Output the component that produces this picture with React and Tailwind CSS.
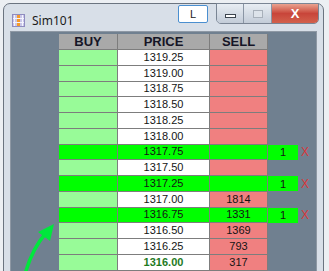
import React from 'react';

const rows = [
  { price: '1319.25' },
  { price: '1319.00' },
  { price: '1318.75' },
  { price: '1318.50' },
  { price: '1318.25' },
  { price: '1318.00' },
  { price: '1317.75', hit: true, order: 1 },
  { price: '1317.50' },
  { price: '1317.25', hit: true, order: 1 },
  { price: '1317.00', sell: '1814' },
  { price: '1316.75', hit: true, sell: '1331', order: 1 },
  { price: '1316.50', sell: '1369' },
  { price: '1316.25', sell: '793' },
  { price: '1316.00', sell: '317', last: true },
];

const font = { fontFamily: '"Liberation Sans", Arial, sans-serif' };

function TitleIcon() {
  return (
    <svg width="13" height="13" viewBox="0 0 13 13">
      <rect x="0" y="0" width="13" height="13" fill="#c9c6e8" />
      <rect x="5" y="0" width="3" height="13" fill="#f59a2a" />
      <path d="M0 4.5H13M0 8.5H13M2.5 0V13M10.5 0V13" stroke="#f4f4ff" strokeWidth="1" />
      <rect x="0.5" y="0.5" width="12" height="12" fill="none" stroke="#8f8cc0" />
    </svg>
  );
}

function Row({ r }) {
  const buyBg = r.hit ? 'bg-[#00ff00]' : 'bg-[#98fb98]';
  const priceBg = r.hit ? 'bg-[#00ff00]' : 'bg-white';
  const sellBg = r.hit ? 'bg-[#00ff00]' : 'bg-[#f08080]';
  return (
    <div className="flex h-[15.75px]">
      <div className="w-[48px]" />
      <div className={`w-[59px] border-r border-b border-[#7d7d7d] ${buyBg}`} />
      <div className={`w-[92px] border-r border-b border-[#7d7d7d] ${priceBg} flex items-center justify-center text-[11px] leading-none ${r.last ? 'font-bold text-[#1e7a1e]' : 'text-[#141414]'}`}>
        {r.price}
      </div>
      <div className={`w-[58px] border-r border-b border-[#7d7d7d] ${sellBg} flex items-center justify-center text-[11px] leading-none text-[#141414]`}>
        {r.sell}
      </div>
      {r.order && (
        <div className="flex items-center">
          <div className="w-[30px] h-[15px] bg-[#00ff00] flex items-center justify-center text-[11px] text-[#141414]">{r.order}</div>
          <span className="ml-[3px] text-[12px] leading-none text-[#d8383c]">X</span>
        </div>
      )}
    </div>
  );
}

export default function App() {
  return (
    <div className="relative w-[329px] h-[271px] overflow-hidden bg-[#eceff3] pt-[3px] pl-[3px]" style={font}>
      <div className="w-[321px] h-[300px] rounded-t-[7px] border border-[#6b7480] bg-[#d8dfe8]">
        <div className="relative h-[27px] flex items-center pl-[8px] pt-[6px]">
          <TitleIcon />
          <span className="ml-[7px] text-[12px] text-[#1b1b1b]" style={{ fontFamily: '"Noto Sans", "Liberation Sans", sans-serif' }}>Sim101</span>
          <div className="absolute left-[174px] top-[1px] w-[30px] h-[18px] bg-white border border-[#4a8fd0] rounded-[2px] flex items-center justify-center text-[11px] text-[#222]">L</div>
          <div className="absolute left-[212px] top-[-1px] flex h-[21px] rounded-b-[5px] border border-[#7a8594] overflow-hidden">
            <div className="w-[27px] bg-gradient-to-b from-[#e8edf3] to-[#c3ccd8] border-r border-[#8a95a4] flex items-end justify-center pb-[5px]">
              <div className="w-[11px] h-[4px] bg-white border border-[#3c444e]" />
            </div>
            <div className="w-[28px] bg-gradient-to-b from-[#e8edf3] to-[#c3ccd8] border-r border-[#8a95a4] flex items-center justify-center">
              <div className="w-[10px] h-[8px] border border-[#a8b0ba] bg-[#dde3ea]" />
            </div>
            <div className="w-[46px] bg-gradient-to-b from-[#e9a18f] via-[#c8453a] to-[#d2604c] flex items-center justify-center text-white font-bold text-[13px]">
              X
            </div>
          </div>
        </div>
        <div className="mx-[6px] h-[270px] border border-[#8e98a4] bg-[#708090] pt-[2px]">
          <div className="flex h-[16px]">
            <div className="w-[48px]" />
            <div className="w-[59px] border-r border-b border-[#7d7d7d] bg-[#a9a9a9] flex items-center justify-center text-[13px] font-bold text-[#151526]">BUY</div>
            <div className="w-[92px] border-r border-b border-[#7d7d7d] bg-[#a9a9a9] flex items-center justify-center text-[13px] font-bold text-[#151526]">PRICE</div>
            <div className="w-[58px] border-r border-b border-[#7d7d7d] bg-[#a9a9a9] flex items-center justify-center text-[13px] font-bold text-[#151526]">SELL</div>
          </div>
          {rows.map((r) => (
            <Row key={r.price} r={r} />
          ))}
        </div>
      </div>
      <svg className="absolute left-0 top-0 pointer-events-none" width="329" height="271" viewBox="0 0 329 271">
        <path d="M24 278 Q31 250 46 233" stroke="#00e83c" strokeWidth="3.5" fill="none" strokeLinecap="round" />
        <polygon points="54,224 38,232 50,241" fill="#00e83c" />
      </svg>
    </div>
  );
}
